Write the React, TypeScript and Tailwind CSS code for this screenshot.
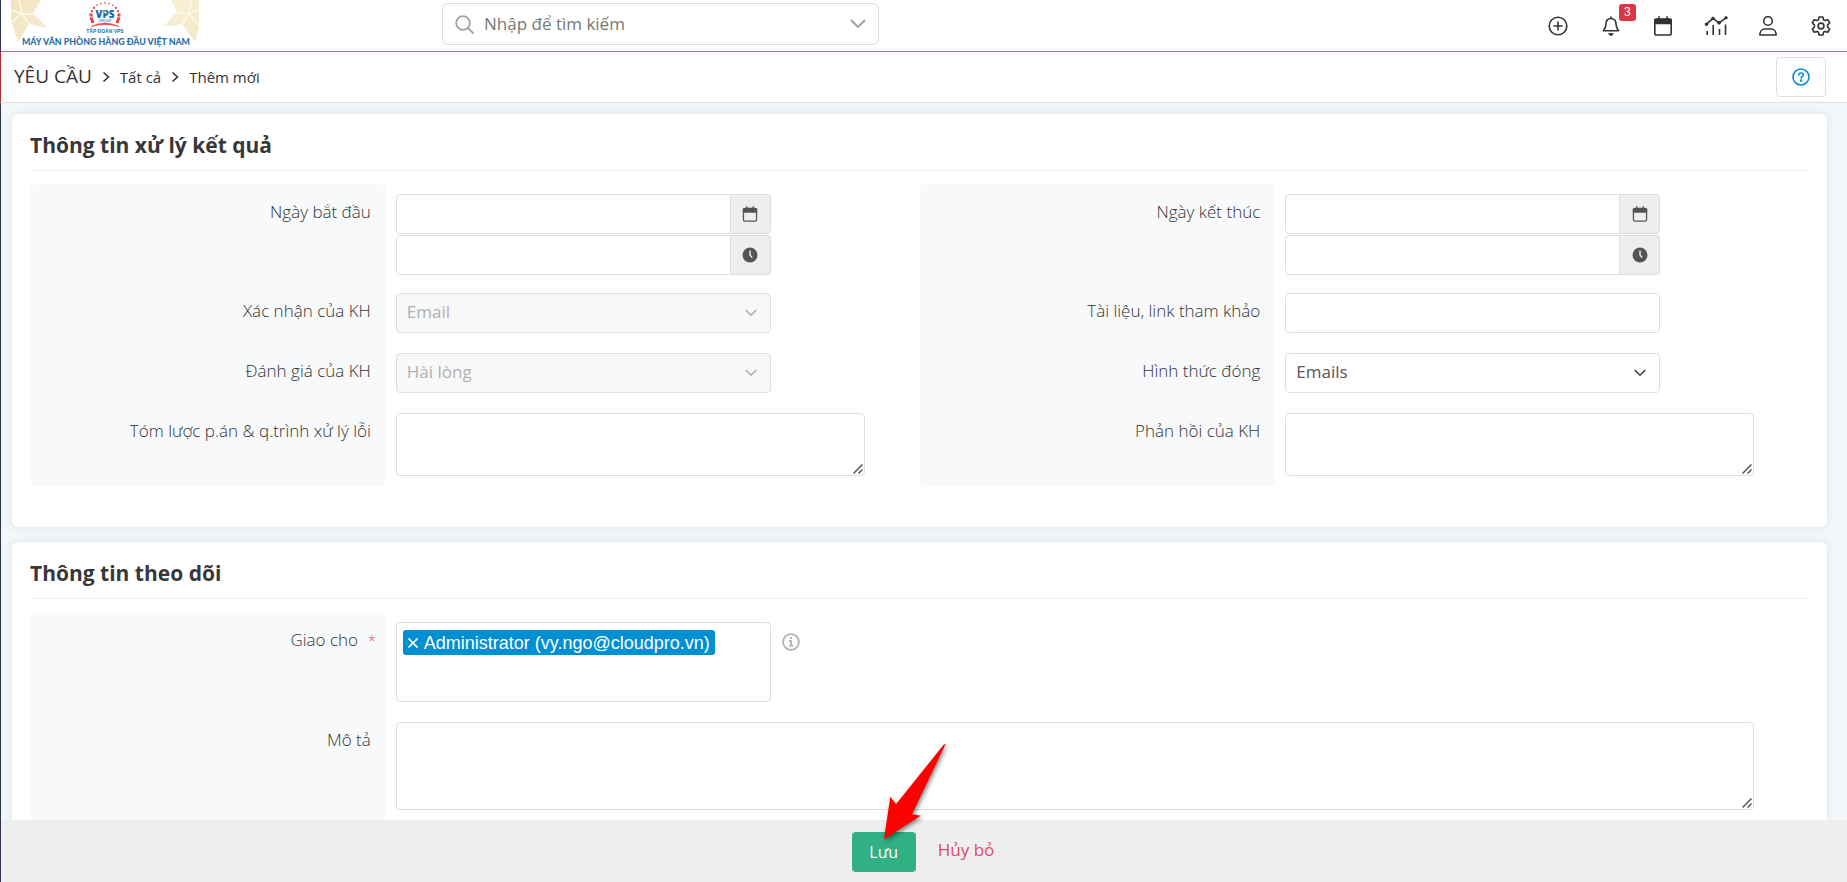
import type { ReactNode } from 'react';

type Child = { children?: ReactNode };

function Logo() {
  const ring = Array.from({ length: 13 }, (_, i) => {
    const a = Math.PI * (0.93 + (i * 1.14) / 12);
    return { x: 94 + 14 * Math.cos(a), y: 16 + 13 * Math.sin(a), s: i < 2 || i > 10 ? 3 : i < 4 || i > 8 ? 2 : 1.4 };
  });
  return (
    <svg className="h-12 w-[188px] shrink-0" viewBox="0 0 188 48" role="img" aria-label="VPS Group">
      <defs>
        <linearGradient id="goldL" x1="0" y1="0" x2="1" y2="1">
          <stop offset="0" stopColor="#f3e4bf" />
          <stop offset="1" stopColor="#f5ead0" />
        </linearGradient>
        <linearGradient id="goldR" x1="0" y1="0" x2="1" y2="1">
          <stop offset="0" stopColor="#faf3d3" />
          <stop offset="1" stopColor="#f2e6c8" />
        </linearGradient>
      </defs>
      <path d="M0 0H30L22 14L37 28L18 24L7 42L0 20Z" fill="url(#goldL)" />
      <path d="M188 0H160L166 12L152 27L171 24L184 42L188 28Z" fill="url(#goldR)" />
      <path d="M0 10L11 14L8 0M11 14L22 14M11 14L18 24M11 14L0 22" stroke="#fffaf0" strokeWidth="1.4" fill="none" />
      <path d="M188 10L178 14L180 0M178 14L166 12M178 14L171 24M178 14L188 26" stroke="#fffaf0" strokeWidth="1.4" fill="none" />
      {ring.map((p, i) => (
        <rect key={i} x={p.x - p.s / 2} y={p.y - p.s / 2} width={p.s} height={p.s} fill="#e2434b" />
      ))}
      <rect x="80" y="20" width="3" height="3" fill="#e2434b" />
      <rect x="105" y="20" width="3" height="3" fill="#e2434b" />
      <text x="94" y="17.5" textAnchor="middle" fontFamily="Open Sans, sans-serif" fontWeight="800" fontSize="10" fill="#1668ad">VPS</text>
      <circle cx="94" cy="12" r="1.2" fill="#f2d33c" />
      <text x="94" y="21.5" textAnchor="middle" fontFamily="Liberation Sans, sans-serif" fontWeight="700" fontSize="3.5" fill="#5d94bf">GROUP</text>
      <path d="M80 26.5Q94 19.5 108 26.5Q94 22.500 80 26.500Z" fill="#e2434b" stroke="#e2434b" strokeWidth="0.6" />
      <text x="94" y="33" textAnchor="middle" fontFamily="Liberation Sans, sans-serif" fontWeight="700" fontSize="5" fill="#2477ab">TẬP ĐOÀN VPS</text>
      <text x="95" y="45" textAnchor="middle" fontFamily="Lato, sans-serif" fontWeight="900" fontSize="8.8" fill="#2b6fa8">MÁY VĂN PHÒNG HÀNG ĐẦU VIỆT NAM</text>
    </svg>
  );
}

function Line({ size, box = 20, width = 1.6, children }: Child & { size: string; box?: number; width?: number }) {
  return (
    <svg className={size} viewBox={`0 0 ${box} ${box}`} fill="none" stroke="currentColor" strokeWidth={width} strokeLinecap="round" strokeLinejoin="round" aria-hidden="true">
      {children}
    </svg>
  );
}

const PlusCircle = () => (
  <Line size="size-5">
    <circle cx="10" cy="10" r="8.8" />
    <path d="M10 6v8M6 10h8" />
  </Line>
);

const Bell = () => (
  <Line size="size-5">
    <path d="M10 1v1.500M10 2.500c-3.300 0-5 2.500-5 5.500 0 3.500-1 4.800-2.600 6.700h15.200C16 12.800 15 11.500 15 8c0-3-1.700-5.500-5-5.500Z" />
    <path d="M8 17.500h4a2 2 0 0 1-4 0Z" fill="currentColor" strokeWidth="0.8" />
  </Line>
);

const Calendar = ({ size }: { size: string }) => (
  <Line size={size}>
    <rect x="1.800" y="3" width="16.400" height="16" rx="1.800" />
    <path d="M1.800 3.500h16.400v4H1.800Z" fill="currentColor" />
    <path d="M6 0.800v2M14 0.800v2" />
  </Line>
);

const Chart = () => (
  <svg className="h-5 w-6" viewBox="0 0 24 20" fill="none" stroke="currentColor" strokeWidth="1.600" strokeLinecap="round" strokeLinejoin="round" aria-hidden="true">
    <path d="M2.500 8.200L9 2.400L15 6.800L22 1.800" />
    <path d="M3.200 15v4M9.200 9v10M15.500 13v6M21.500 8.500V19" strokeLinecap="butt" />
    <g fill="currentColor" strokeWidth="0.600">
      <circle cx="2.500" cy="8.200" r="1.500" />
      <circle cx="9" cy="2.400" r="1.500" />
      <circle cx="15" cy="6.800" r="1.500" />
      <circle cx="22" cy="1.800" r="1.300" />
    </g>
  </svg>
);

const Person = () => (
  <Line size="size-5">
    <circle cx="10" cy="5" r="4.300" />
    <path d="M1.800 19c0-3.500 2-6 5-6h6.400c3 0 5 2.500 5 6Z" />
  </Line>
);

const Gear = () => (
  <Line size="size-5">
    <path d="M8.100 1h3.800l.6 2.700 1.600.9 2.700-.9 1.900 3.300-2.100 1.900v2.200l2.100 1.900-1.900 3.300-2.700-.9-1.600.9-.6 2.700H8.100l-.6-2.700-1.600-.9-2.700.9L1.300 13l2.100-1.900V8.900L1.300 7l1.900-3.300 2.700.9 1.600-.9Z" />
    <circle cx="10" cy="10" r="2.900" />
  </Line>
);

const Chevron = ({ className }: { className: string }) => (
  <svg className={className} viewBox="0 0 16 10" fill="none" stroke="currentColor" strokeWidth="2" strokeLinecap="round" strokeLinejoin="round" aria-hidden="true">
    <path d="M1.500 1.500L8 8l6.500-6.500" />
  </svg>
);

const Clock = () => (
  <svg className="size-4" viewBox="0 0 16 16" aria-hidden="true">
    <circle cx="8" cy="8" r="7.500" fill="currentColor" />
    <path d="M8 3.500V8l2.200 2.600" fill="none" stroke="#eee" strokeWidth="1.400" />
  </svg>
);

const Separator = () => (
  <svg className="h-3 w-2" viewBox="0 0 8 12" fill="none" stroke="#333" strokeWidth="1.600" aria-hidden="true">
    <path d="M1.500 1.500L6.500 6l-5 4.500" />
  </svg>
);

function HeaderButton({ label, children }: Child & { label: string }) {
  return (
    <button type="button" aria-label={label} className="flex items-center justify-center text-[#333]">
      <span className="relative">{children}</span>
    </button>
  );
}

function Section({ title, children }: Child & { title: string }) {
  return (
    <section className="rounded-md bg-white px-[18px] pb-[41px] shadow-[0_0_6px_2px_rgba(0,0,0,0.06)]">
      <h2 className="mb-[13px] flex h-[57px] items-center border-b border-[#ececec] pt-2 text-[21px] font-bold text-[#383838]">{title}</h2>
      {children}
    </section>
  );
}

function Row({ id, label, labelWidth = 'w-2/5', required = false, children }: Child & { id: string; label: string; labelWidth?: string; required?: boolean }) {
  return (
    <div className="group flex">
      <div className={`${labelWidth} shrink-0 bg-[#f8f9fb] pt-4 text-right group-first:rounded-t-md group-last:rounded-b-md ${required ? 'pr-2.5' : 'pr-[15px]'}`}>
        <label htmlFor={id} className="text-[17px] leading-6 font-light text-[#333]">
          {label}
          {required && <span className="ml-2.5 text-sm text-[#e8405c]">*</span>}
        </label>
      </div>
      <div className="min-w-0 flex-1 py-2.5 pl-2.5">{children}</div>
    </div>
  );
}

const field = 'block h-10 w-full rounded border border-[#dedede] bg-white px-2.5 text-[17px] text-[#555] outline-none';

function TextArea({ id, height }: { id: string; height: string }) {
  return (
    <div className="relative w-[calc(100%-55px)]">
      <textarea id={id} className={`block w-full rounded border border-[#dedede] px-2.5 text-[17px] outline-none [&::-webkit-resizer]:bg-transparent ${height}`} />
      <svg className="pointer-events-none absolute right-[2px] bottom-[2px] size-2.5" viewBox="0 0 10 10" stroke="#555" strokeWidth="1.500" aria-hidden="true">
        <path d="M0.500 9.500l9-9M5.500 9.500l4-4" />
      </svg>
    </div>
  );
}

function DateTime({ id, label }: { id: string; label: string }) {
  const addon = 'flex w-10 shrink-0 items-center justify-center rounded-r border border-l-0 border-[#dedede] bg-[#eee] text-[#555]';
  return (
    <div className="-mb-0.5 flex w-[375px] flex-col gap-px">
      <div className="flex">
        <input id={id} type="text" className={`${field} rounded-r-none`} />
        <button type="button" aria-label={`${label}: lịch`} className={addon}>
          <Calendar size="size-4" />
        </button>
      </div>
      <div className="flex">
        <input type="text" aria-label={`${label}: giờ`} className={`${field} rounded-r-none`} />
        <button type="button" aria-label={`${label}: chọn giờ`} className={addon}>
          <Clock />
        </button>
      </div>
    </div>
  );
}

function Picker({ id, value, disabled = false }: { id: string; value: string; disabled?: boolean }) {
  return (
    <div className="relative w-[375px]">
      <select id={id} disabled={disabled} className={`${field} appearance-none pb-0.5 disabled:bg-[#f8f8f8] disabled:text-[#b0b0b0] disabled:opacity-100`}>
        <option>{value}</option>
      </select>
      <Chevron className={`pointer-events-none absolute top-4 right-3.5 h-2 w-3 ${disabled ? 'text-[#b0b0b0]' : 'text-[#444]'}`} />
    </div>
  );
}

export default function App() {
  return (
    <div className="flex h-screen flex-col border-l border-[#2b364a] bg-[#f3f7fa] font-['Open_Sans','Noto_Sans',sans-serif] text-[#333]">
      <header className="flex h-[52px] shrink-0 items-start border-b border-[#3aaa76] bg-white pl-2.5">
        <Logo />
        <div className="mt-[3px] ml-[243px] flex h-[42px] w-[437px] items-center rounded-md border border-[#dedede] px-3">
          <svg className="size-[19px] shrink-0 text-[#a3a3a3]" viewBox="0 0 19 19" fill="none" stroke="currentColor" strokeWidth="1.800" strokeLinecap="round" aria-hidden="true">
            <circle cx="8" cy="8" r="6.800" />
            <path d="M13 13l5 5" />
          </svg>
          <input type="text" aria-label="Tìm kiếm" placeholder="Nhập để tìm kiếm" className="min-w-0 flex-1 px-2.5 text-[17px] outline-none placeholder:text-[#777]" />
          <button type="button" aria-label="Mở danh sách" className="text-[#a3a3a3]">
            <Chevron className="h-2.5 w-4" />
          </button>
        </div>
        <nav aria-label="Công cụ" className="ml-auto grid h-[51px] w-[315px] grid-cols-6">
          <HeaderButton label="Thêm"><PlusCircle /></HeaderButton>
          <HeaderButton label="Thông báo">
            <Bell />
            <span className="absolute -top-3 left-[18px] flex size-[17px] items-center justify-center rounded-[3px] bg-[#dc3545] font-['Liberation_Sans',sans-serif] text-xs text-white">3</span>
          </HeaderButton>
          <HeaderButton label="Lịch"><Calendar size="size-5" /></HeaderButton>
          <HeaderButton label="Báo cáo"><Chart /></HeaderButton>
          <HeaderButton label="Tài khoản"><Person /></HeaderButton>
          <HeaderButton label="Cài đặt"><Gear /></HeaderButton>
        </nav>
      </header>

      <div className="-ml-px flex h-[51px] shrink-0 items-center border-b border-l border-b-[#dedede] border-l-[#b02a30] bg-white pr-[21px] pl-[13px]">
        <nav aria-label="Đường dẫn" className="flex items-baseline pb-0.5 text-[15px]">
          <a href="#requests" className="mr-2.5 text-[19px]">YÊU CẦU</a>
          <Separator />
          <a href="#all" className="mx-2.5">Tất cả</a>
          <Separator />
          <a href="#new" className="ml-2.5">Thêm mới</a>
        </nav>
        <button type="button" aria-label="Trợ giúp" className="ml-auto flex h-10 w-[50px] items-center justify-center rounded border border-[#dedede] text-[#0e8bd6]">
          <Line size="size-[18px]" box={18}>
            <circle cx="9" cy="9" r="8" />
            <path d="M6.800 7c0-1.200.9-2 2.200-2s2.300.8 2.300 2c0 1.500-2.100 1.500-2.100 3" />
            <circle cx="9.100" cy="12.600" r="0.500" fill="currentColor" />
          </Line>
        </button>
      </div>

      <main className="min-h-0 flex-1 overflow-y-auto pt-[11px] pr-5 pl-[11px] [scrollbar-width:none]">
        <form id="request-form" className="flex flex-col gap-[15px]">
          <Section title="Thông tin xử lý kết quả">
            <div className="grid grid-cols-2">
              <div>
                <Row id="start" label="Ngày bắt đầu"><DateTime id="start" label="Ngày bắt đầu" /></Row>
                <Row id="confirm" label="Xác nhận của KH"><Picker id="confirm" value="Email" disabled /></Row>
                <Row id="rating" label="Đánh giá của KH"><Picker id="rating" value="Hài lòng" disabled /></Row>
                <Row id="summary" label="Tóm lược p.án & q.trình xử lý lỗi"><TextArea id="summary" height="h-[63px]" /></Row>
              </div>
              <div>
                <Row id="end" label="Ngày kết thúc"><DateTime id="end" label="Ngày kết thúc" /></Row>
                <Row id="docs" label="Tài liệu, link tham khảo">
                  <div className="w-[375px]"><input id="docs" type="text" className={field} /></div>
                </Row>
                <Row id="close" label="Hình thức đóng"><Picker id="close" value="Emails" /></Row>
                <Row id="feedback" label="Phản hồi của KH"><TextArea id="feedback" height="h-[63px]" /></Row>
              </div>
            </div>
          </Section>

          <Section title="Thông tin theo dõi">
            <div>
              <Row id="owner" label="Giao cho" labelWidth="w-1/5" required>
                <div className="flex items-start">
                  <div className="flex h-20 w-[375px] flex-wrap content-start rounded border border-[#dedede] px-1.5 pt-[7px] font-['Liberation_Sans',Arial,sans-serif]">
                    <span className="flex h-[25px] items-center gap-1.5 rounded-[3px] bg-[#008fd3] px-[5px] text-lg text-white">
                      <button type="button" aria-label="Xóa Administrator">
                        <svg className="size-2.5" viewBox="0 0 10 10" stroke="#fff" strokeWidth="1.600" aria-hidden="true">
                          <path d="M0.500 0.500l9 9M9.500 0.500l-9 9" />
                        </svg>
                      </button>
                      Administrator (vy.ngo@cloudpro.vn)
                    </span>
                    <input id="owner" type="text" className="h-[25px] w-10 outline-none" />
                  </div>
                  <svg className="mt-[11px] ml-[11px] size-[18px] shrink-0" viewBox="0 0 18 18" fill="none" stroke="#b3b3b3" strokeWidth="1.800" aria-hidden="true">
                    <circle cx="9" cy="9" r="7.900" />
                    <path d="M7 8h2v4.800M6.800 12.600h4.600M8 5h2" />
                  </svg>
                </div>
              </Row>
              <Row id="description" label="Mô tả" labelWidth="w-1/5"><TextArea id="description" height="h-[88px]" /></Row>
            </div>
          </Section>
        </form>
      </main>

      <footer className="relative z-10 flex h-[62px] shrink-0 items-center justify-center gap-[22px] bg-[#eee] pt-0.5 pr-0.5">
        <div className="relative">
          <button type="submit" form="request-form" className="h-10 w-16 rounded bg-[#31b083] text-base text-white">Lưu</button>
          <svg className="pointer-events-none absolute -top-[95px] left-[27px] h-[110px] w-20 overflow-visible" viewBox="240 110 240 330" aria-hidden="true">
            <path d="M440 131L434 133L291 312L274 289L255 417L365 346L339 342Z" fill="#f00" className="drop-shadow-[4px_6px_6px_rgba(0,0,0,0.5)]" />
          </svg>
        </div>
        <a href="#cancel" className="-mt-1 text-[17px] text-[#dc4a68]">Hủy bỏ</a>
      </footer>
    </div>
  );
}
